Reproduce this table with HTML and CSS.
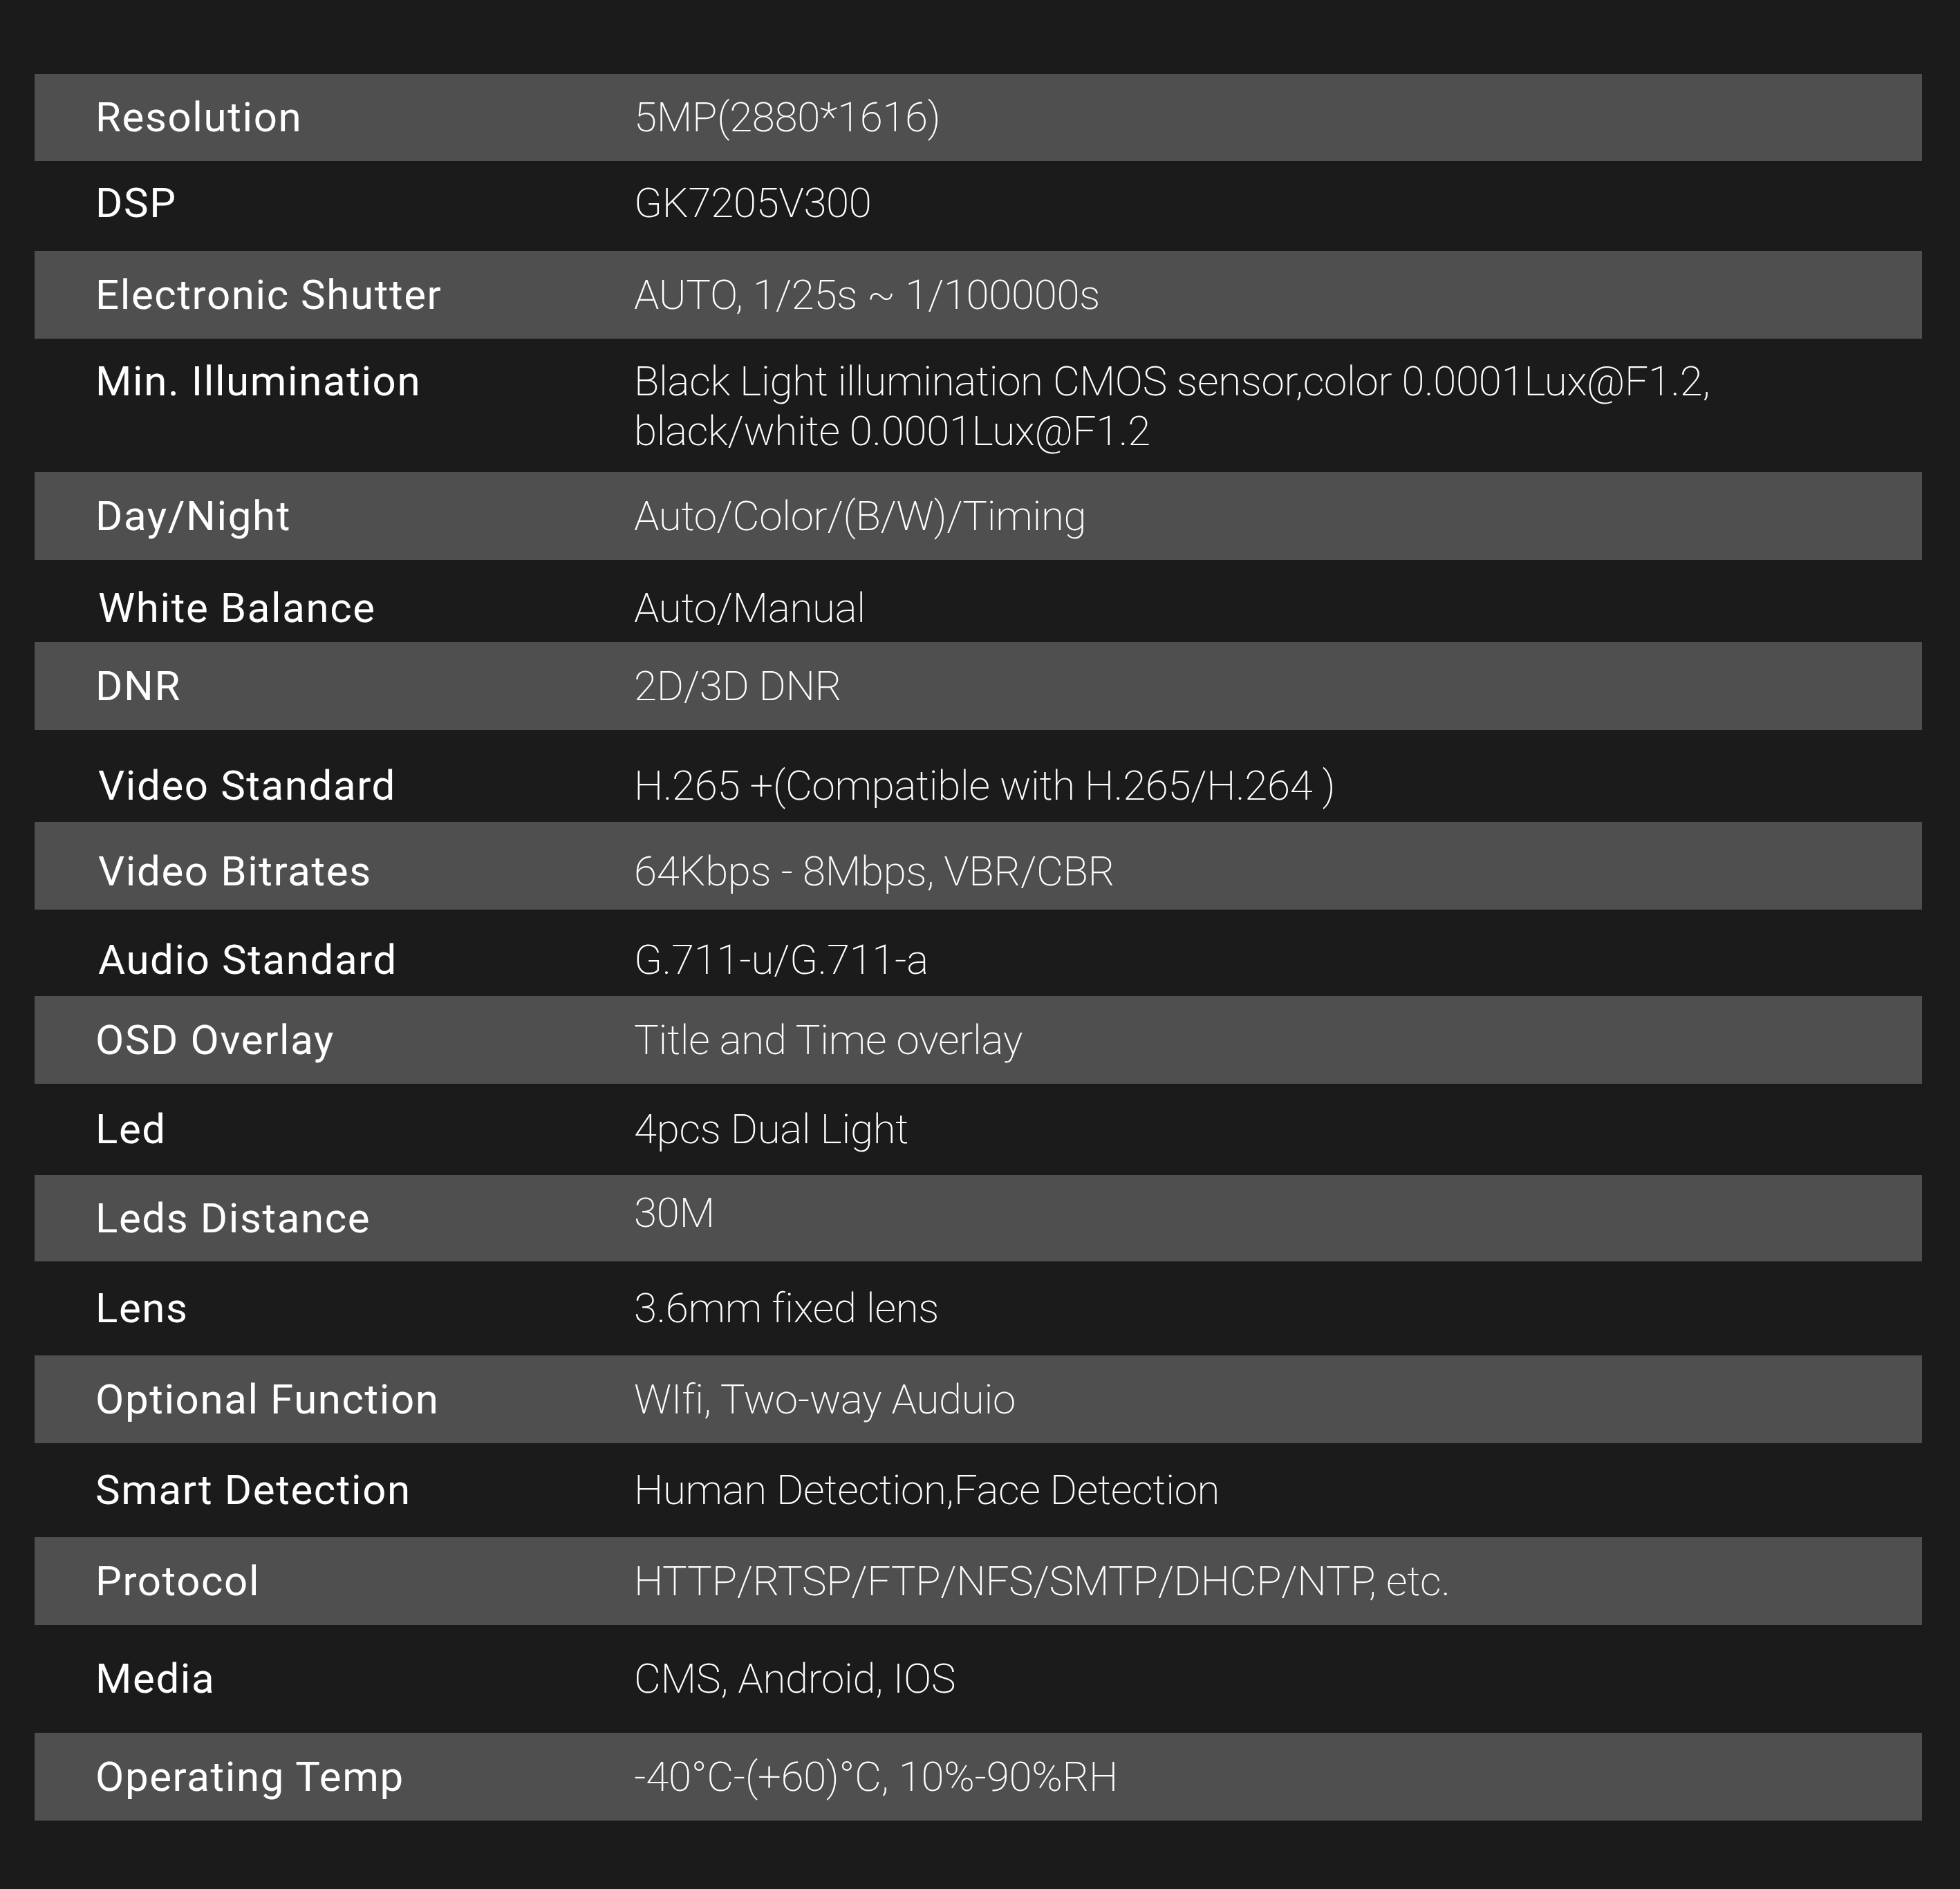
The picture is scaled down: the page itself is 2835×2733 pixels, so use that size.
FILE: index.html
```html
<!DOCTYPE html>
<html lang="en">
<head>
<meta charset="utf-8">
<title>Specifications</title>
<link rel="stylesheet" href="styles.css">
</head>
<body>
<main class="page">
  <div class="spec">
    <div class="row shade"><div class="label">Resolution</div><div class="value">5MP(2880*1616)</div></div>
    <div class="row"><div class="label">DSP</div><div class="value">GK7205V300</div></div>
    <div class="row shade"><div class="label">Electronic Shutter</div><div class="value">AUTO, 1/25s ~ 1/100000s</div></div>
    <div class="row tall"><div class="label">Min. Illumination</div><div class="value">Black Light illumination CMOS sensor,color 0.0001Lux@F1.2,<br>black/white 0.0001Lux@F1.2</div></div>
    <div class="row shade"><div class="label">Day/Night</div><div class="value">Auto/Color/(B/W)/Timing</div></div>
    <div class="row"><div class="label">White Balance</div><div class="value">Auto/Manual</div></div>
    <div class="row shade"><div class="label">DNR</div><div class="value">2D/3D DNR</div></div>
    <div class="row"><div class="label">Video Standard</div><div class="value">H.265 +(Compatible with H.265/H.264 )</div></div>
    <div class="row shade"><div class="label">Video Bitrates</div><div class="value">64Kbps - 8Mbps, VBR/CBR</div></div>
    <div class="row"><div class="label">Audio Standard</div><div class="value">G.711-u/G.711-a</div></div>
    <div class="row shade"><div class="label">OSD Overlay</div><div class="value">Title and Time overlay</div></div>
    <div class="row"><div class="label">Led</div><div class="value">4pcs Dual Light</div></div>
    <div class="row shade"><div class="label">Leds Distance</div><div class="value raised">30M</div></div>
    <div class="row"><div class="label">Lens</div><div class="value">3.6mm fixed lens</div></div>
    <div class="row shade"><div class="label">Optional Function</div><div class="value">WIfi, Two-way Auduio</div></div>
    <div class="row"><div class="label">Smart Detection</div><div class="value">Human Detection,Face Detection</div></div>
    <div class="row shade"><div class="label">Protocol</div><div class="value">HTTP/RTSP/FTP/NFS/SMTP/DHCP/NTP, etc.</div></div>
    <div class="row"><div class="label">Media</div><div class="value">CMS, Android, IOS</div></div>
    <div class="row shade"><div class="label">Operating Temp</div><div class="value">-40°C-(+60)°C, 10%-90%RH</div></div>
  </div>
</main>
</body>
</html>
```
FILE: styles.css
```css
html, body {
  margin: 0;
  padding: 0;
  background: #1b1b1b;
}

.page {
  width: 2835px;
  height: 2733px;
  box-sizing: border-box;
  padding: 107px 55px 0 50px;
  background: #1b1b1b;
  font-family: Roboto, "Noto Sans", "Liberation Sans", sans-serif;
  color: #ffffff;
}

.spec {
  display: flex;
  flex-direction: column;
}

.row {
  display: grid;
  grid-template-columns: 779px 1fr;
  align-items: center;
  padding-left: 88px;
  height: 126px;
  box-sizing: border-box;
}

.row.shade {
  background: #4f4f4f;
  height: 127px;
}

.label {
  font-size: 60px;
  font-weight: 400;
  letter-spacing: 1.6px;
  line-height: 72px;
  white-space: nowrap;
}

.value {
  font-size: 60px;
  font-weight: 200;
  letter-spacing: -0.3px;
  line-height: 72px;
  white-space: nowrap;
}

.value.raised {
  margin-bottom: 16px;
}

.row.tall {
  align-items: start;
  height: 193px;
  padding-top: 26px;
}

/* per-row heights and small text offsets */
.row:nth-child(1) { height: 126px; }
.row:nth-child(2) { height: 130px; padding-bottom: 8px; }
.row:nth-child(6) { height: 119px; padding-top: 20px; }
.row:nth-child(8) { height: 133px; padding-top: 28px; }
.row:nth-child(9) { padding-top: 16px; }
.row:nth-child(10) { height: 125px; padding-top: 20px; }
.row:nth-child(12) { height: 132px; }
.row:nth-child(13) { height: 125px; }
.row:nth-child(14) { height: 136px; }
.row:nth-child(16) { height: 136px; }
.row:nth-child(18) { height: 156px; }

.row:nth-child(6) .label,
.row:nth-child(8) .label,
.row:nth-child(9) .label,
.row:nth-child(10) .label {
  padding-left: 4px;
}
```
